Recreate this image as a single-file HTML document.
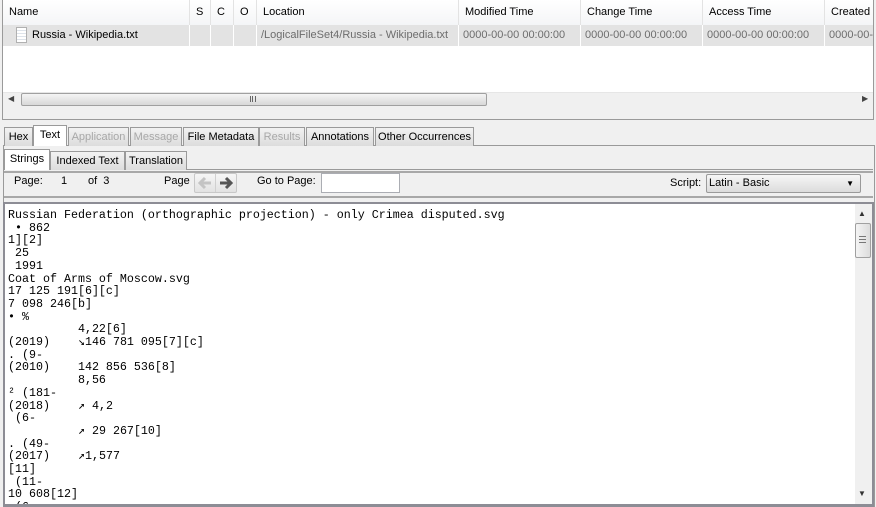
<!DOCTYPE html>
<html><head><style>
*{margin:0;padding:0;box-sizing:border-box}
html,body{width:876px;height:507px;overflow:hidden}
body{background:#f0f0f0;font-family:"Liberation Sans",sans-serif;font-size:11px;color:#000;position:relative}
.a{position:absolute;white-space:nowrap}
.hd{top:0;height:25px;line-height:25px;padding-left:6px;border-right:1px solid #e3e3e3;background:linear-gradient(#fff,#f4f5f7)}
.cell{top:25px;height:21px;line-height:21px;padding-left:4px;border-right:1px solid #fff;color:#6d6d6d;overflow:hidden}
.tab{top:127px;height:19px;line-height:18px;border:1px solid #9a9a9a;border-bottom:none;background:linear-gradient(#f2f2f2,#dcdcdc);text-align:center}
.dis{color:#a8a8a8}
pre{font-family:"Liberation Mono",monospace;font-size:11.67px;line-height:12.7px}
</style></head><body>
<div class="a" style="left:2px;top:0;width:872px;height:120px;background:#fff;border:1px solid #9a9a9a;border-top:none"></div>
<div class="a hd" style="left:3px;width:187px">Name</div>
<div class="a hd" style="left:190px;width:21px">S</div>
<div class="a hd" style="left:211px;width:23px">C</div>
<div class="a hd" style="left:234px;width:23px">O</div>
<div class="a hd" style="left:257px;width:202px">Location</div>
<div class="a hd" style="left:459px;width:122px">Modified Time</div>
<div class="a hd" style="left:581px;width:122px">Change Time</div>
<div class="a hd" style="left:703px;width:122px">Access Time</div>
<div class="a hd" style="left:825px;width:48px;overflow:hidden;border:none">Created Time</div>
<div class="a" style="left:3px;top:25px;width:870px;height:21px;background:#e3e3e3"></div>
<div class="a" style="left:16px;top:27px;width:11px;height:16px;border:1px solid #b0b0b0;background:repeating-linear-gradient(#fff 0 2px,#dde3ea 2px 3px)"></div>
<div class="a cell" style="left:28px;width:162px;color:#000">Russia - Wikipedia.txt</div>
<div class="a cell" style="left:190px;width:21px"></div>
<div class="a cell" style="left:211px;width:23px"></div>
<div class="a cell" style="left:234px;width:23px"></div>
<div class="a cell" style="left:257px;width:202px">/LogicalFileSet4/Russia - Wikipedia.txt</div>
<div class="a cell" style="left:459px;width:122px">0000-00-00 00:00:00</div>
<div class="a cell" style="left:581px;width:122px">0000-00-00 00:00:00</div>
<div class="a cell" style="left:703px;width:122px">0000-00-00 00:00:00</div>
<div class="a cell" style="left:825px;width:48px;border:none">0000-00-00</div>
<div class="a" style="left:3px;top:92px;width:870px;height:15px;background:#f0f0f0;border-top:1px solid #e6e6e6"></div>
<div class="a" style="left:8px;top:94px;font-size:8px;color:#444">◀</div>
<div class="a" style="left:21px;top:93px;width:466px;height:13px;border:1px solid #a0a0a0;border-radius:2px;background:linear-gradient(#f4f4f4,#d8d8d8)"></div>
<div class="a" style="left:250px;top:96px;width:6px;height:6px;border-left:1px solid #666;border-right:1px solid #666"></div>
<div class="a" style="left:252px;top:96px;width:1px;height:6px;background:#666"></div>
<div class="a" style="left:862px;top:94px;font-size:8px;color:#444">▶</div>
<div class="a" style="left:3px;top:107px;width:870px;height:12px;background:#f0f0f0"></div>
<div class="a" style="left:3px;top:145px;width:872px;height:1px;background:#9a9a9a"></div>
<div class="a tab" style="left:4px;width:29px">Hex</div>
<div class="a tab" style="left:33px;top:125px;height:21px;width:34px;background:#fff;line-height:19px">Text</div>
<div class="a tab dis" style="left:68px;width:61px">Application</div>
<div class="a tab dis" style="left:130px;width:52px">Message</div>
<div class="a tab" style="left:183px;width:76px">File Metadata</div>
<div class="a tab dis" style="left:259px;width:46px">Results</div>
<div class="a tab" style="left:306px;width:68px">Annotations</div>
<div class="a tab" style="left:375px;width:99px">Other Occurrences</div>
<div class="a" style="left:3px;top:146px;width:872px;height:361px;border-left:1px solid #9a9a9a;border-right:1px solid #9a9a9a"></div>
<div class="a" style="left:3px;top:169px;width:870px;height:1px;background:#9a9a9a"></div>
<div class="a tab" style="left:4px;top:149px;height:21px;width:46px;background:#fff;line-height:19px">Strings</div>
<div class="a tab" style="left:50px;top:151px;width:75px;line-height:19px">Indexed Text</div>
<div class="a tab" style="left:125px;top:151px;width:62px;line-height:19px">Translation</div>
<div class="a" style="left:4px;top:171px;width:869px;height:2px;background:#a8a8a8"></div>
<div class="a" style="left:4px;top:196px;width:869px;height:2px;background:#a8a8a8"></div>
<div class="a" style="left:14px;top:175px">Page:</div>
<div class="a" style="left:61px;top:175px">1</div>
<div class="a" style="left:88px;top:175px">of&nbsp;&nbsp;3</div>
<div class="a" style="left:164px;top:175px">Page</div>
<div class="a" style="left:194px;top:173px;width:43px;height:20px;border:1px solid #c8c8c8;border-radius:2px;background:linear-gradient(#f6f6f6,#e2e2e2)"></div>
<div class="a" style="left:215px;top:174px;width:1px;height:18px;background:#d0d0d0"></div>
<svg class="a" style="left:197px;top:176px" width="16" height="14" viewBox="0 0 16 14"><path d="M14 7H3M8 2L3 7L8 12" fill="none" stroke="#c4c4c4" stroke-width="3"/></svg>
<svg class="a" style="left:218px;top:176px" width="16" height="14" viewBox="0 0 16 14"><path d="M2 7H13M8 2L13 7L8 12" fill="none" stroke="#555" stroke-width="3"/></svg>
<div class="a" style="left:257px;top:175px">Go to Page:</div>
<div class="a" style="left:321px;top:173px;width:79px;height:20px;background:#fff;border:1px solid #abadb3"></div>
<div class="a" style="left:670px;top:177px">Script:</div>
<div class="a" style="left:706px;top:174px;width:155px;height:19px;border:1px solid #9a9a9a;border-radius:2px;background:linear-gradient(#f6f6f6,#dcdcdc);padding-left:2px;line-height:17px">Latin - Basic<span style="position:absolute;right:6px;top:0;font-size:8px">▼</span></div>
<div class="a" style="left:3px;top:202px;width:871px;height:305px;border:2px solid #8d8d95;border-bottom-width:3px;background:#fff;overflow:hidden">
<pre style="position:absolute;left:3px;top:5px">Russian Federation (orthographic projection) - only Crimea disputed.svg
 • 862
1][2]
 25
 1991
Coat of Arms of Moscow.svg
17 125 191[6][c]
7 098 246[b]
• %
          4,22[6]
(2019)    ↘146 781 095[7][c]
. (9-
(2010)    142 856 536[8]
          8,56
² (181-
(2018)    ↗ 4,2
 (6-
          ↗ 29 267[10]
. (49-
(2017)    ↗1,577
[11]
 (11-
10 608[12]
 (6-</pre>
<div style="position:absolute;left:850px;top:0;width:17px;height:300px;background:#f0f0f0"></div>
<div style="position:absolute;left:853px;top:5px;font-size:8px;color:#333">▲</div>
<div style="position:absolute;left:850px;top:19px;width:16px;height:35px;border:1px solid #a0a0a0;border-radius:2px;background:linear-gradient(90deg,#f4f4f4,#dcdcdc)"></div>
<div style="position:absolute;left:854px;top:32px;width:7px;height:7px;border-top:1px solid #777;border-bottom:1px solid #777"></div>
<div style="position:absolute;left:854px;top:35px;width:7px;height:1px;background:#777"></div>
<div style="position:absolute;left:853px;top:285px;font-size:8px;color:#333">▼</div>
</div>
</body></html>
